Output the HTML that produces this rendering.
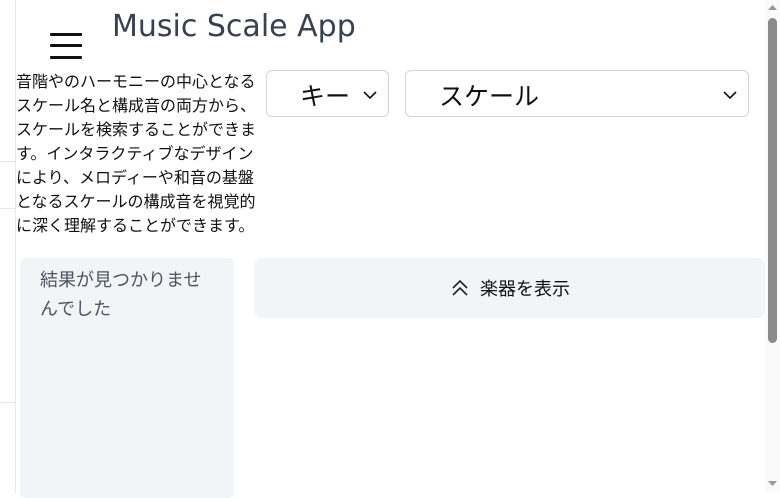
<!DOCTYPE html>
<html><head><meta charset="utf-8"><style>
*{margin:0;padding:0;box-sizing:border-box}
body{width:780px;height:493px;overflow:hidden;background:#fff;position:relative;font-family:"DejaVu Sans","Noto Sans CJK JP",sans-serif}
.a{position:absolute}
.vl{left:15px;top:0;width:1px;height:493px;background:#e5e7eb}
.hl{left:0;width:15px;height:1px;background:#e5e7eb}
.bar{left:50px;width:32px;height:3px;background:#111;border-radius:1px}
.sel{border:1px solid #d1d5db;border-radius:6px;background:#fff;color:#111}
</style></head><body>
<div class="a vl"></div>
<div class="a hl" style="top:161px"></div>
<div class="a hl" style="top:208px"></div>
<div class="a hl" style="top:402px"></div>
<div class="a bar" style="top:33px"></div>
<div class="a bar" style="top:44px"></div>
<div class="a bar" style="top:56px"></div>
<div class="a" style="left:112px;top:9px;font-size:30px;color:#374151;white-space:nowrap">Music Scale App</div>
<div class="a" style="left:16px;top:70px;width:250px;font-size:16px;line-height:24px;color:#111">音階やのハーモニーの中心となるスケール名と構成音の両方から、スケールを検索することができます。インタラクティブなデザインにより、メロディーや和音の基盤となるスケールの構成音を視覚的に深く理解することができます。</div>
<div class="a sel" style="left:266px;top:70px;width:123px;height:47px">
<span class="a" style="left:33px;top:6px;font-size:25px">キー</span>
<svg class="a" style="left:95px;top:18px" width="16" height="12" viewBox="0 0 16 12"><path d="M2 3l6 6 6-6" fill="none" stroke="#111" stroke-width="1.6"/></svg></div>
<div class="a sel" style="left:405px;top:70px;width:344px;height:47px">
<span class="a" style="left:33px;top:6px;font-size:25px">スケール</span>
<svg class="a" style="left:316px;top:18px" width="16" height="12" viewBox="0 0 16 12"><path d="M2 3l6 6 6-6" fill="none" stroke="#111" stroke-width="1.6"/></svg></div>
<div class="a" style="left:20px;top:258px;width:214px;height:240px;background:#f3f4f6;border-radius:6px">
<div style="padding:8px 20px;font-size:18px;line-height:29px;color:#4b5563">結果が見つかりませんでした</div></div>
<div class="a" style="left:254px;top:258px;width:511px;height:60px;background:#f3f4f6;border-radius:8px">
<svg class="a" style="left:197px;top:20px" width="18" height="20" viewBox="0 0 18 20"><path d="M2 10l7-7 7 7M2 17l7-7 7 7" fill="none" stroke="#222" stroke-width="1.6"/></svg>
<span class="a" style="left:226px;top:17px;font-size:18px;color:#111">楽器を表示</span></div>
<div class="a" style="left:765px;top:0;width:15px;height:493px;background:#fafafa"></div>
<div class="a" style="left:768px;top:18px;width:9px;height:325px;background:#8a8a8a;border-radius:5px"></div>
<svg class="a" style="left:768px;top:5px" width="9" height="6"><path d="M0 5L4.5 0 9 5z" fill="#999"/></svg>
<svg class="a" style="left:768px;top:481px" width="9" height="6"><path d="M0 0L4.5 5 9 0z" fill="#999"/></svg>
</body></html>
